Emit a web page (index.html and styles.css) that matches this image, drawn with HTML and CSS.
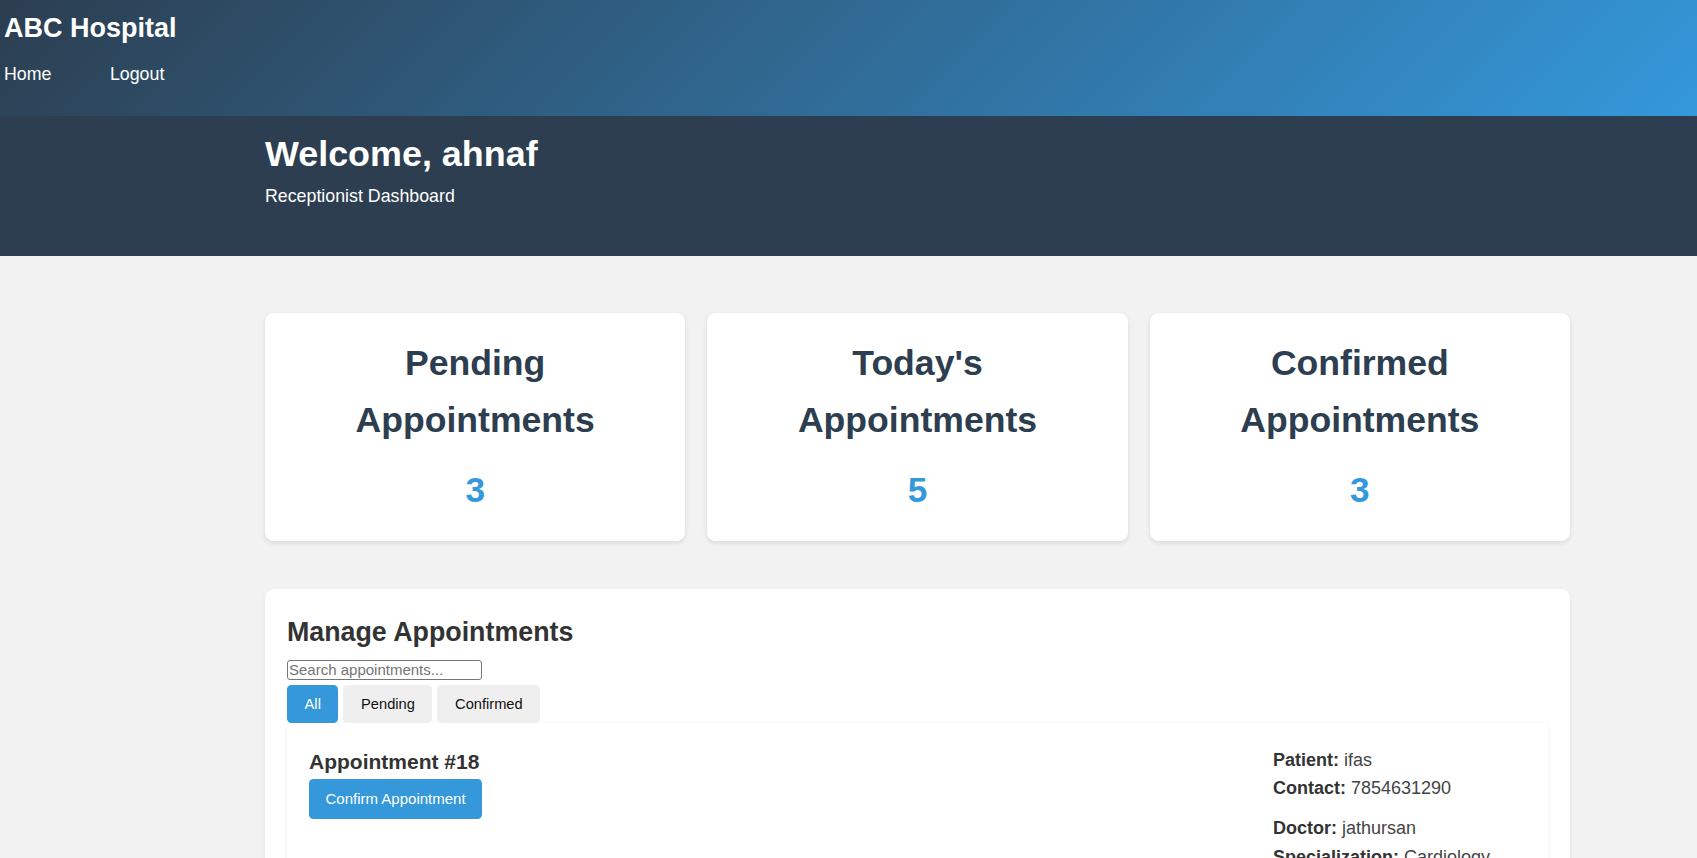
FILE: index.html
```html
<!DOCTYPE html>
<html lang="en">
<head>
<meta charset="utf-8">
<title>Receptionist Dashboard - ABC Hospital</title>
<link rel="stylesheet" href="styles.css">
</head>
<body>
<header class="site-header">
  <h1 class="brand">ABC Hospital</h1>
  <nav class="nav">
    <a href="#">Home</a>
    <a href="#">Logout</a>
  </nav>
</header>

<section class="welcome">
  <div class="container">
    <h1 class="welcome-title">Welcome, ahnaf</h1>
    <p class="welcome-sub">Receptionist Dashboard</p>
  </div>
</section>

<main class="container">
  <div class="stats">
    <div class="stat-card">
      <h3>Pending Appointments</h3>
      <div class="stat-number">3</div>
    </div>
    <div class="stat-card">
      <h3>Today's Appointments</h3>
      <div class="stat-number">5</div>
    </div>
    <div class="stat-card">
      <h3>Confirmed Appointments</h3>
      <div class="stat-number">3</div>
    </div>
  </div>

  <section class="manage">
    <h2>Manage Appointments</h2>
    <input type="text" class="search" placeholder="Search appointments...">
    <div class="filters">
      <button class="filter active">All</button>
      <button class="filter">Pending</button>
      <button class="filter">Confirmed</button>
    </div>

    <div class="appt-card">
      <div class="appt-main">
        <h3>Appointment #18</h3>
        <button class="btn-confirm">Confirm Appointment</button>
      </div>
      <div class="appt-details">
        <div class="group">
          <p><strong>Patient:</strong> ifas</p>
          <p><strong>Contact:</strong> 7854631290</p>
        </div>
        <div class="group">
          <p><strong>Doctor:</strong> jathursan</p>
          <p><strong>Specialization:</strong> Cardiology</p>
        </div>
        <div class="group">
          <p><strong>Status:</strong> pending</p>
        </div>
      </div>
    </div>
  </section>
</main>
</body>
</html>
```

FILE: styles.css
```css
html {
  scrollbar-width: none;
}
html::-webkit-scrollbar {
  display: none;
}

body {
  margin: 0;
  font-family: "Liberation Sans", Arial, sans-serif;
  line-height: 1.6;
  background: #f2f2f2;
  color: #333;
}

/* Header */
.site-header {
  box-sizing: border-box;
  height: 116px;
  padding: 7.4px 4px 0;
  background: linear-gradient(135deg, #2c3e50 0%, #3498db 100%);
  color: #fff;
}

.brand {
  margin: 0;
  font-size: 27px;
  line-height: 42.24px;
}

.nav {
  display: flex;
  gap: 58.5px;
  margin-top: 10.6px;
  font-size: 17.8px;
  line-height: 28.16px;
}

.nav a {
  color: #fff;
  text-decoration: none;
}

/* Welcome banner */
.welcome {
  box-sizing: border-box;
  height: 140px;
  padding-top: 9.5px;
  background: #2c3e50;
  color: #fff;
}

.container {
  width: 1305px;
  margin-left: 265px;
}

.welcome-title {
  margin: 0;
  font-size: 35.9px;
  line-height: 56.3px;
}

.welcome-sub {
  margin: 0;
  font-size: 17.8px;
  line-height: 28.16px;
}

/* Stats */
.stats {
  display: grid;
  grid-template-columns: repeat(3, 1fr);
  gap: 22px;
  margin-top: 57px;
}

.stat-card {
  background: #fff;
  border-radius: 8.8px;
  padding: 22px 26px 23px;
  text-align: center;
  box-shadow: 0 2px 5px rgba(0, 0, 0, 0.1);
}

.stat-card h3 {
  margin: 0 0 12.3px;
  font-size: 35.6px;
  line-height: 57.4px;
  color: #2c3e50;
}

.stat-number {
  font-size: 35.2px;
  line-height: 56.3px;
  font-weight: bold;
  color: #3498db;
}

/* Manage appointments */
.manage {
  margin-top: 48px;
  padding: 22px;
  background: #fff;
  border-radius: 8.8px;
  box-shadow: 0 2px 5px rgba(0, 0, 0, 0.06);
}

.manage h2 {
  margin: 0 0 6px;
  font-size: 26.8px;
  line-height: 42.24px;
  color: #333;
}

.search {
  display: block;
  box-sizing: border-box;
  width: 195px;
  height: 20px;
  padding: 0 1px;
  border: 1px solid #767676;
  border-radius: 3px;
  font-family: "Liberation Sans", Arial, sans-serif;
  font-size: 15px;
  color: #333;
}

.search::placeholder {
  color: #757575;
}

.filters {
  display: flex;
  gap: 5px;
  margin-top: 5px;
}

.filter {
  padding: 11px 17.6px;
  border: none;
  border-radius: 4.4px;
  background: #efefef;
  color: #111;
  font-family: "Liberation Sans", Arial, sans-serif;
  font-size: 14.67px;
  line-height: normal;
  cursor: pointer;
}

.filter.active {
  background: #3498db;
  color: #fff;
}

.appt-card {
  display: flex;
  justify-content: space-between;
  align-items: flex-start;
  padding: 23px 22px 22px;
  background: #fff;
  border-radius: 5.5px;
  box-shadow: 0 1px 4px rgba(0, 0, 0, 0.08);
}

.appt-main h3 {
  margin: 0;
  font-size: 21px;
  line-height: 32.9px;
  color: #333;
}

.btn-confirm {
  margin-top: 0.5px;
  padding: 11.4px 16.5px;
  border: none;
  border-radius: 4.4px;
  background: #3498db;
  color: #fff;
  font-family: "Liberation Sans", Arial, sans-serif;
  font-size: 15px;
  line-height: normal;
  cursor: pointer;
}

.appt-details {
  width: 253px;
  font-size: 18px;
  line-height: 28.8px;
  color: #444;
}

.appt-details p {
  margin: 0;
}

.appt-details strong {
  color: #333;
}

.appt-details .group + .group {
  margin-top: 11px;
}
```
